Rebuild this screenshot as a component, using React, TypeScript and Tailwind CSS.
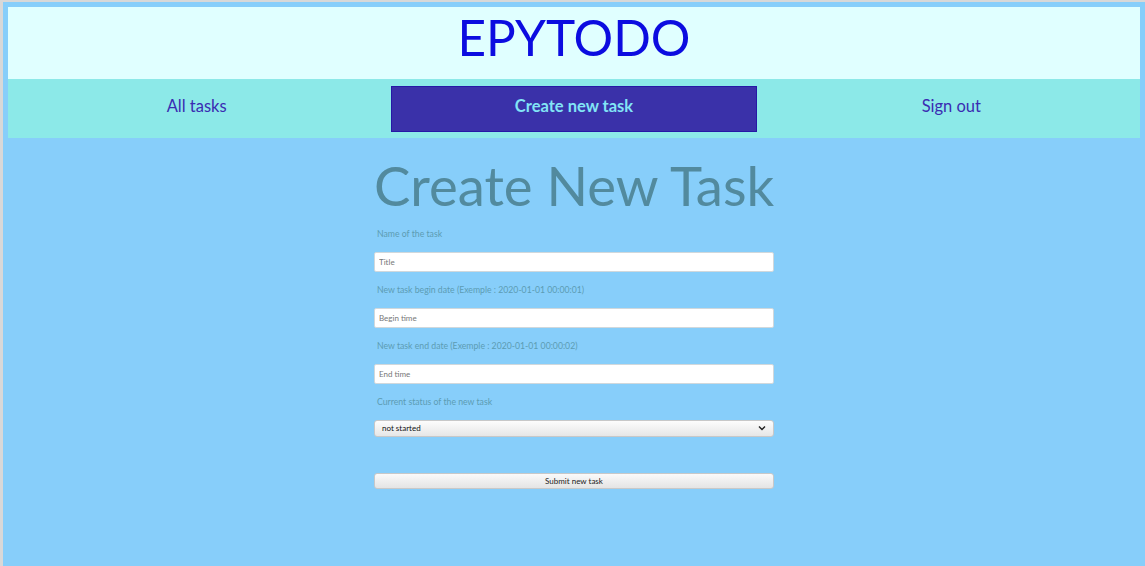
import React from "react";

export default function App() {
  const font = { fontFamily: "Lato, 'Noto Sans', sans-serif" };
  const label = "text-[8.7px] text-[#5c9cb3] ml-[3px] mt-[11px] leading-[14px]";
  const input =
    "mt-[11px] h-[20px] bg-white rounded-[2px] border border-[#d0d8dc] px-[4px] text-[8px] placeholder:text-[#777]";
  return (
    <div
      style={font}
      className="min-h-[566px] bg-[#87CEFA] border-l-[3px] border-t-[2px] border-[#d8d8d8] px-[5px] pt-[5px] pb-[5px]"
    >
      <header className="h-[72px] bg-[#E0FFFF] flex items-center justify-center pb-[11px]">
        <h1 className="text-[49.5px] leading-none text-[#0c0ce0] font-normal">EPYTODO</h1>
      </header>
      <nav className="h-[59px] bg-[#8CE9E8] grid grid-cols-3 items-center">
        <div className="flex justify-center pb-[4px]">
          <span className="text-[16.5px] text-[#3a2cb2]">All tasks</span>
        </div>
        <div className="px-[6px]">
          <div className="h-[46px] bg-[#3A31A9] border-[1.5px] border-[#2618a6] flex items-center justify-center pb-[4px]">
            <span className="text-[16.5px] font-bold text-[#82e4f6]">Create new task</span>
          </div>
        </div>
        <div className="flex justify-center pb-[4px]">
          <span className="text-[16.5px] text-[#3a2cb2]">Sign out</span>
        </div>
      </nav>
      <main className="w-[400px] mx-auto flex flex-col">
        <h2 className="text-[54.5px] leading-none text-[#528A9E] mt-[20px] text-center whitespace-nowrap">
          Create New Task
        </h2>
        <label className={label.replace("mt-[11px]", "mt-[14px]")}>Name of the task</label>
        <input placeholder="Title" className={input} />
        <label className={label}>New task begin date (Exemple : 2020-01-01 00:00:01)</label>
        <input placeholder="Begin time" className={input} />
        <label className={label}>New task end date (Exemple : 2020-01-01 00:00:02)</label>
        <input placeholder="End time" className={input} />
        <label className={label}>Current status of the new task</label>
        <div className="mt-[11px] h-[17px] rounded-[3px] border border-[#c8c8c8] bg-gradient-to-b from-[#fdfdfd] to-[#e6e6e6] flex items-center justify-between px-[7px]">
          <span className="text-[8px] text-[#111]">not started</span>
          <svg width="8" height="6" viewBox="0 0 8 6" fill="none">
            <path d="M1 1.5 L4 4.5 L7 1.5" stroke="#222" strokeWidth="1.4" />
          </svg>
        </div>
        <button className="mt-[36px] h-[16px] rounded-[3px] border border-[#c8c8c8] bg-gradient-to-b from-[#fafafa] to-[#e4e4e4] text-[8px] text-[#222] flex items-center justify-center">
          Submit new task
        </button>
      </main>
    </div>
  );
}
